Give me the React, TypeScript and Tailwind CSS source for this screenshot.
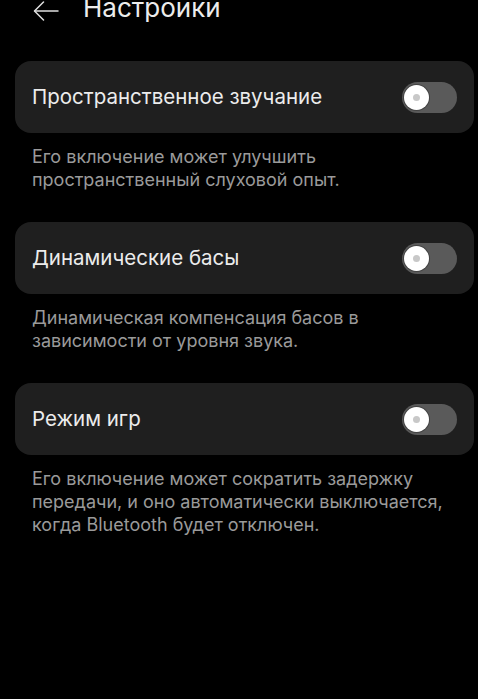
const settings = [
  {
    title: 'Пространственное звучание',
    desc: ['Его включение может улучшить', 'пространственный слуховой опыт.'],
  },
  {
    title: 'Динамические басы',
    desc: ['Динамическая компенсация басов в', 'зависимости от уровня звука.'],
  },
  {
    title: 'Режим игр',
    desc: [
      'Его включение может сократить задержку',
      'передачи, и оно автоматически выключается,',
      'когда Bluetooth будет отключен.',
    ],
  },
];

function Toggle() {
  return (
    <div className="flex h-[31px] w-[55px] items-center rounded-full bg-[#5a5a5a] pl-[2px]">
      <div className="flex h-[25px] w-[25px] items-center justify-center rounded-full bg-white shadow-[0_0_0_1px_rgba(0,0,0,0.25)]">
        <div className="h-[7px] w-[7px] rounded-full bg-[#c8c8c8]" />
      </div>
    </div>
  );
}

export default function App() {
  return (
    <div className="min-h-screen bg-black font-['Inter',sans-serif] text-[#e8e8e8]">
      <header className="flex h-[61px] items-start gap-[24px] pl-[33px]">
        <svg width="26" height="20" viewBox="0 0 26 20" className="mt-[1px]" fill="none" stroke="#e0e0e0" strokeWidth="1.5" strokeLinecap="round" strokeLinejoin="round">
          <path d="M25 10H2" />
          <path d="M10.5 1L1.5 10L10.5 19" />
        </svg>
        <h1 className="mt-[-5px] text-[26px] leading-[26px] font-normal text-[#ececec]">Настройки</h1>
      </header>

      <main className="flex flex-col px-[15px] pr-[4px]">
        {settings.map(s => (
          <section key={s.title} className="flex flex-col">
            <div className="flex h-[72px] items-center justify-between rounded-[16px] bg-[#1f1f1f] pl-[17px] pr-[17px]">
              <span className="text-[20.5px] text-[#ececec]">{s.title}</span>
              <Toggle />
            </div>
            <p className="pt-[12px] pb-[31px] pl-[17px] text-[18px] leading-[23px] text-[#9a9a9a]">
              {s.desc.map(line => (
                <span key={line} className="block whitespace-nowrap">{line}</span>
              ))}
            </p>
          </section>
        ))}
      </main>
    </div>
  );
}
